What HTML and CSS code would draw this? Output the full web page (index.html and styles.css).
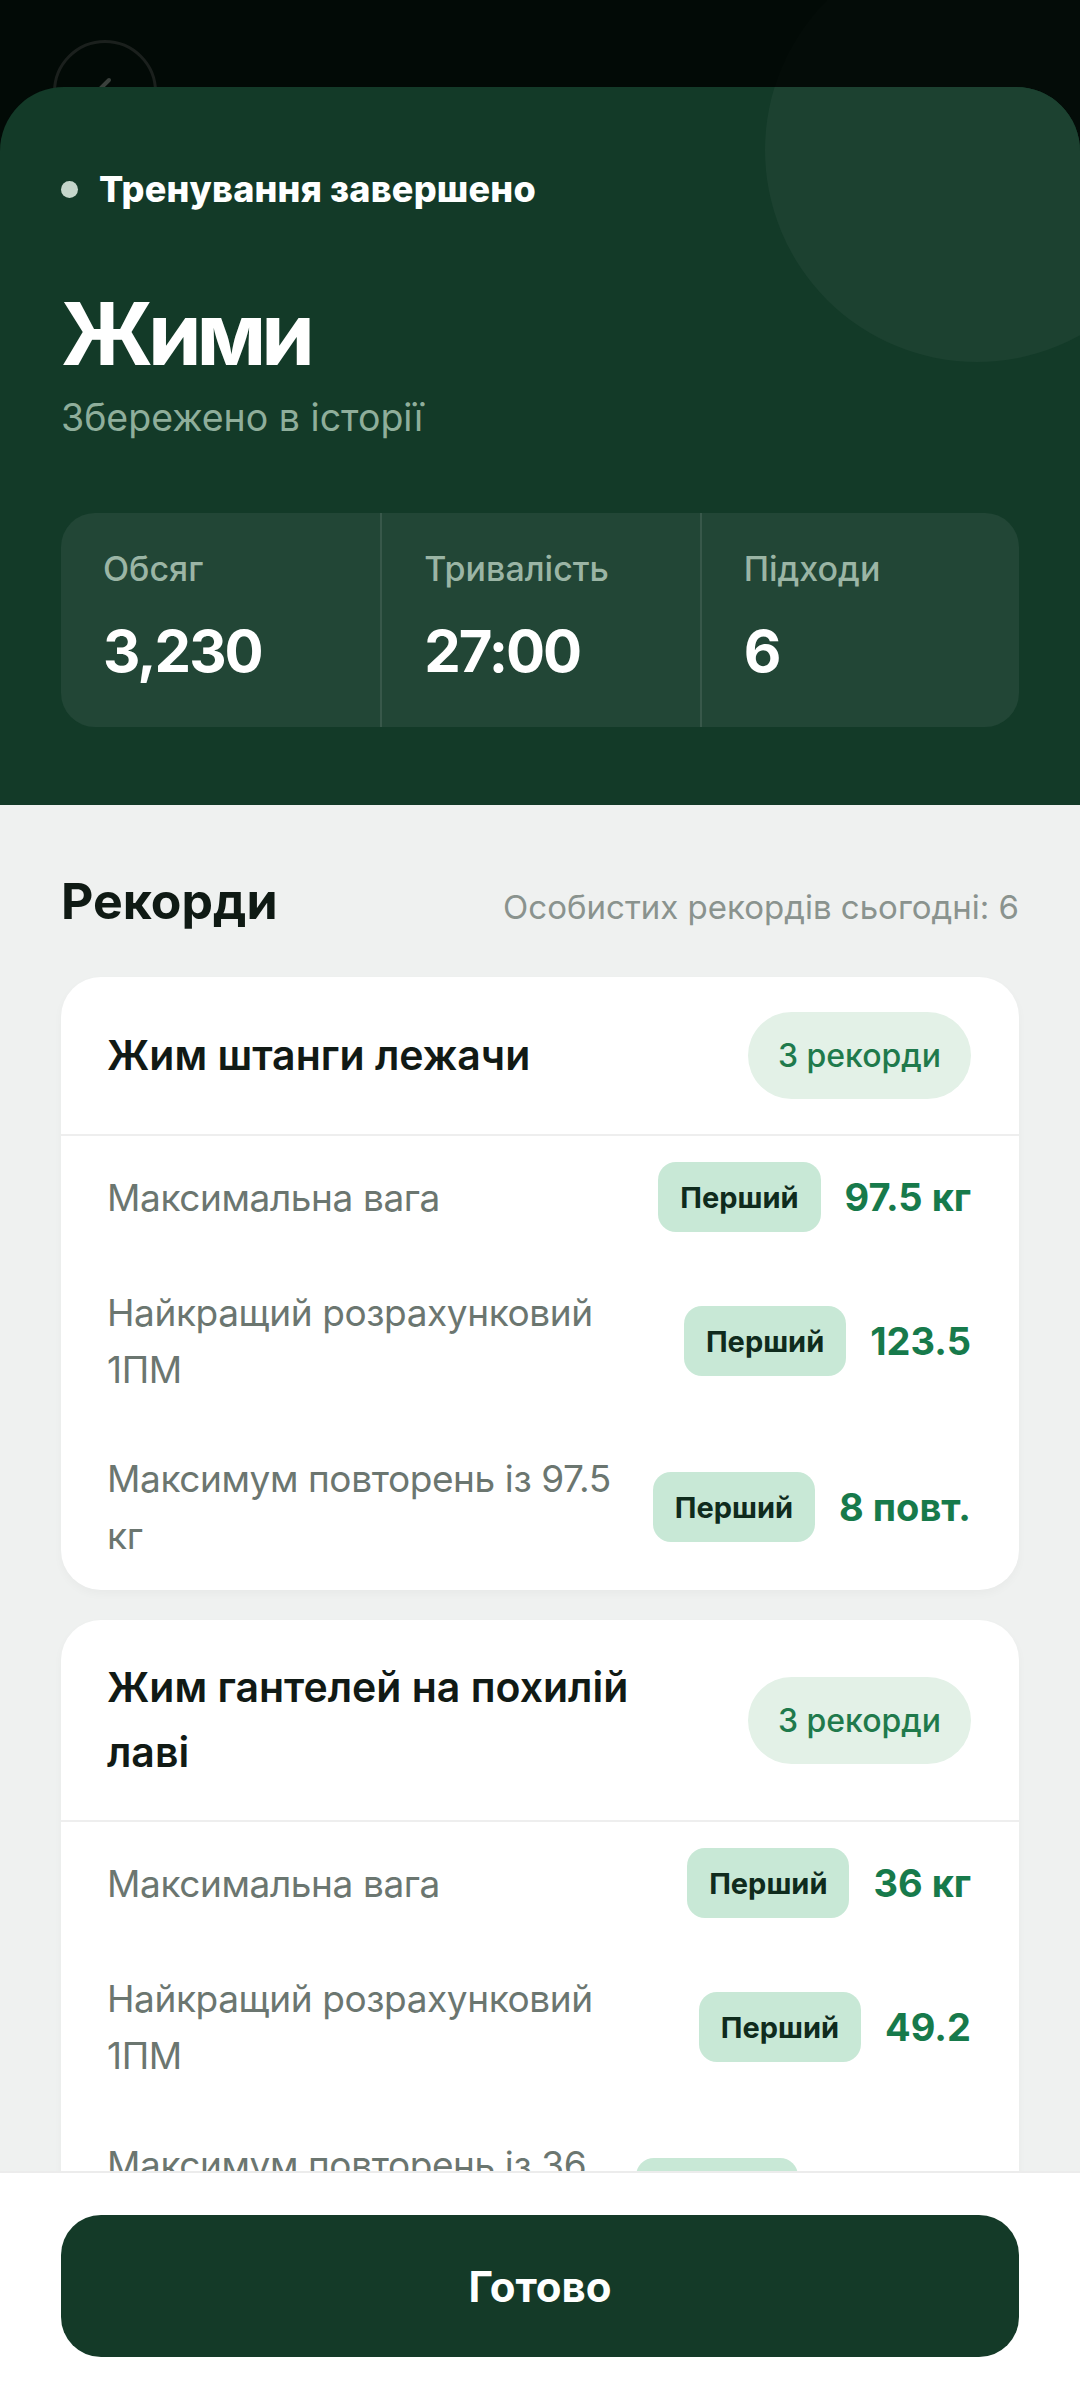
FILE: index.html
```html
<!DOCTYPE html>
<html lang="uk">
<head>
<meta charset="utf-8">
<title>Жими</title>
<link rel="stylesheet" href="styles.css">
</head>
<body>
<div class="screen">
  <div class="top">
    <div class="backdrop-circle"></div>
    <div class="back-btn">
      <svg width="40" height="40" viewBox="0 0 40 40"><path d="M24 8 L12 20 L24 32" fill="none" stroke="#3a403c" stroke-width="4" stroke-linecap="round" stroke-linejoin="round"/></svg>
    </div>
    <section class="hero">
      <div class="hero-circle"></div>
      <div class="status"><span class="dot"></span><span>Тренування завершено</span></div>
      <h1 class="title">Жими</h1>
      <p class="subtitle">Збережено в історії</p>
      <div class="stats">
        <div class="stat"><div class="stat-label">Обсяг</div><div class="stat-value">3,230</div></div>
        <div class="stat"><div class="stat-label">Тривалість</div><div class="stat-value">27:00</div></div>
        <div class="stat"><div class="stat-label">Підходи</div><div class="stat-value">6</div></div>
      </div>
    </section>
  </div>

  <main class="records">
    <div class="records-head">
      <h2 class="records-title">Рекорди</h2>
      <span class="records-count">Особистих рекордів сьогодні: 6</span>
    </div>

    <div class="card">
      <div class="card-head">
        <div class="card-title">Жим штанги лежачи</div>
        <span class="pill">3 рекорди</span>
      </div>
      <div class="row">
        <div class="row-label">Максимальна вага</div>
        <div class="row-right"><span class="tag">Перший</span><span class="val">97.5 кг</span></div>
      </div>
      <div class="row">
        <div class="row-label">Найкращий розрахунковий 1ПМ</div>
        <div class="row-right"><span class="tag">Перший</span><span class="val">123.5</span></div>
      </div>
      <div class="row">
        <div class="row-label">Максимум повторень із 97.5 кг</div>
        <div class="row-right"><span class="tag">Перший</span><span class="val">8 повт.</span></div>
      </div>
    </div>

    <div class="card">
      <div class="card-head">
        <div class="card-title">Жим гантелей на похилій лаві</div>
        <span class="pill">3 рекорди</span>
      </div>
      <div class="row">
        <div class="row-label">Максимальна вага</div>
        <div class="row-right"><span class="tag">Перший</span><span class="val">36 кг</span></div>
      </div>
      <div class="row">
        <div class="row-label">Найкращий розрахунковий 1ПМ</div>
        <div class="row-right"><span class="tag">Перший</span><span class="val">49.2</span></div>
      </div>
      <div class="row">
        <div class="row-label">Максимум повторень із 36 кг</div>
        <div class="row-right"><span class="tag">Перший</span><span class="val">10 повт.</span></div>
      </div>
    </div>
  </main>

  <footer class="footer">
    <button class="done">Готово</button>
  </footer>
</div>
</body>
</html>
```
FILE: styles.css
```css
* { box-sizing: border-box; }
html, body { margin: 0; padding: 0; }
body {
  width: 1080px;
  height: 2400px;
  overflow: hidden;
  font-family: Inter, "Noto Sans", sans-serif;
  background: #eff1f0;
}
.screen {
  position: relative;
  width: 1080px;
  height: 2400px;
  overflow: hidden;
  background: #eff1f0;
}
.top {
  position: relative;
  background: #020a06;
  padding-top: 87px;
}
.backdrop-circle {
  position: absolute;
  left: 765px;
  top: -62px;
  width: 424px;
  height: 424px;
  border-radius: 50%;
  background: rgba(255, 255, 255, 0.012);
}
.back-btn {
  position: absolute;
  left: 53px;
  top: 40px;
  width: 104px;
  height: 104px;
  border-radius: 50%;
  border: 3px solid #1b201d;
  display: flex;
  align-items: center;
  justify-content: center;
}
.hero {
  position: relative;
  z-index: 1;
  background: #133a28;
  border-radius: 64px 64px 0 0;
  padding: 82px 61px 78px;
  overflow: hidden;
}
.hero-circle {
  position: absolute;
  left: 765px;
  top: -149px;
  width: 424px;
  height: 424px;
  border-radius: 50%;
  background: #1c4130;
}
.status {
  position: relative;
  display: flex;
  align-items: center;
  gap: 21px;
  color: #ffffff;
  font-weight: 800;
  font-size: 36px;
  line-height: 40px;
  letter-spacing: 0.2px;
}
.dot {
  width: 17px;
  height: 17px;
  border-radius: 50%;
  background: #c5d6cb;
}
.title {
  position: relative;
  margin: 82px 0 0;
  color: #ffffff;
  font-size: 86px;
  line-height: 87px;
  font-weight: 700;
  letter-spacing: -5px;
}
.subtitle {
  position: relative;
  margin: 18px 0 0;
  color: #8fae9b;
  font-size: 37.5px;
  line-height: 44px;
}
.stats {
  position: relative;
  margin-top: 73px;
  display: grid;
  grid-template-columns: 1fr 1fr 1fr;
  background: #224636;
  border-radius: 34px;
}
.stat {
  padding: 36px 20px 41px 42px;
}
.stat + .stat {
  border-left: 2px solid rgba(255, 255, 255, 0.1);
}
.stat-label {
  color: #9bb5a5;
  font-size: 34px;
  line-height: 40px;
  font-weight: 500;
}
.stat-value {
  margin-top: 27px;
  color: #ffffff;
  font-size: 58px;
  line-height: 70px;
  font-weight: 700;
  letter-spacing: -2px;
}
.records {
  padding: 66px 61px 0;
}
.records-head {
  display: flex;
  justify-content: space-between;
  align-items: baseline;
}
.records-title {
  margin: 0;
  color: #0f1a14;
  font-size: 50px;
  line-height: 60px;
  font-weight: 700;
}
.records-count {
  color: #8a938e;
  font-size: 33px;
}
.card {
  margin-top: 46px;
  background: #ffffff;
  border-radius: 40px;
  overflow: hidden;
  box-shadow: 0 4px 10px rgba(0, 0, 0, 0.03);
}
.card + .card { margin-top: 30px; }
.card-head {
  display: flex;
  align-items: center;
  gap: 40px;
  padding: 35px 48px 35px 46px;
  border-bottom: 2px solid #eeeeee;
}
.card-title {
  flex: 1;
  color: #111a15;
  font-size: 41px;
  line-height: 65px;
  font-weight: 600;
}
.pill {
  height: 87px;
  padding: 0 30px;
  border-radius: 44px;
  background: #e3f1e7;
  color: #1f7a4c;
  font-size: 32px;
  font-weight: 500;
  display: flex;
  align-items: center;
}
.row {
  display: flex;
  align-items: center;
  gap: 30px;
  padding: 26px 48px 26px 46px;
}
.row-label {
  flex: 1;
  color: #6b7670;
  font-size: 37px;
  line-height: 57px;
  letter-spacing: -0.4px;
}
.row-right {
  display: flex;
  align-items: center;
  gap: 24px;
}
.tag {
  height: 70px;
  padding: 0 22px;
  border-radius: 18px;
  background: #c8e8d6;
  color: #0f2b1d;
  font-size: 29px;
  font-weight: 700;
  display: flex;
  align-items: center;
}
.val {
  color: #177a4b;
  font-size: 38px;
  font-weight: 700;
  white-space: nowrap;
}
.footer {
  position: absolute;
  left: 0;
  right: 0;
  bottom: 0;
  height: 229px;
  background: #ffffff;
  border-top: 2px solid #ececec;
  padding: 42px 61px 0;
}
.done {
  width: 100%;
  height: 142px;
  border: none;
  border-radius: 40px;
  background: #143a28;
  color: #ffffff;
  font-family: Inter, "Noto Sans", sans-serif;
  font-size: 42px;
  font-weight: 700;
}
```
